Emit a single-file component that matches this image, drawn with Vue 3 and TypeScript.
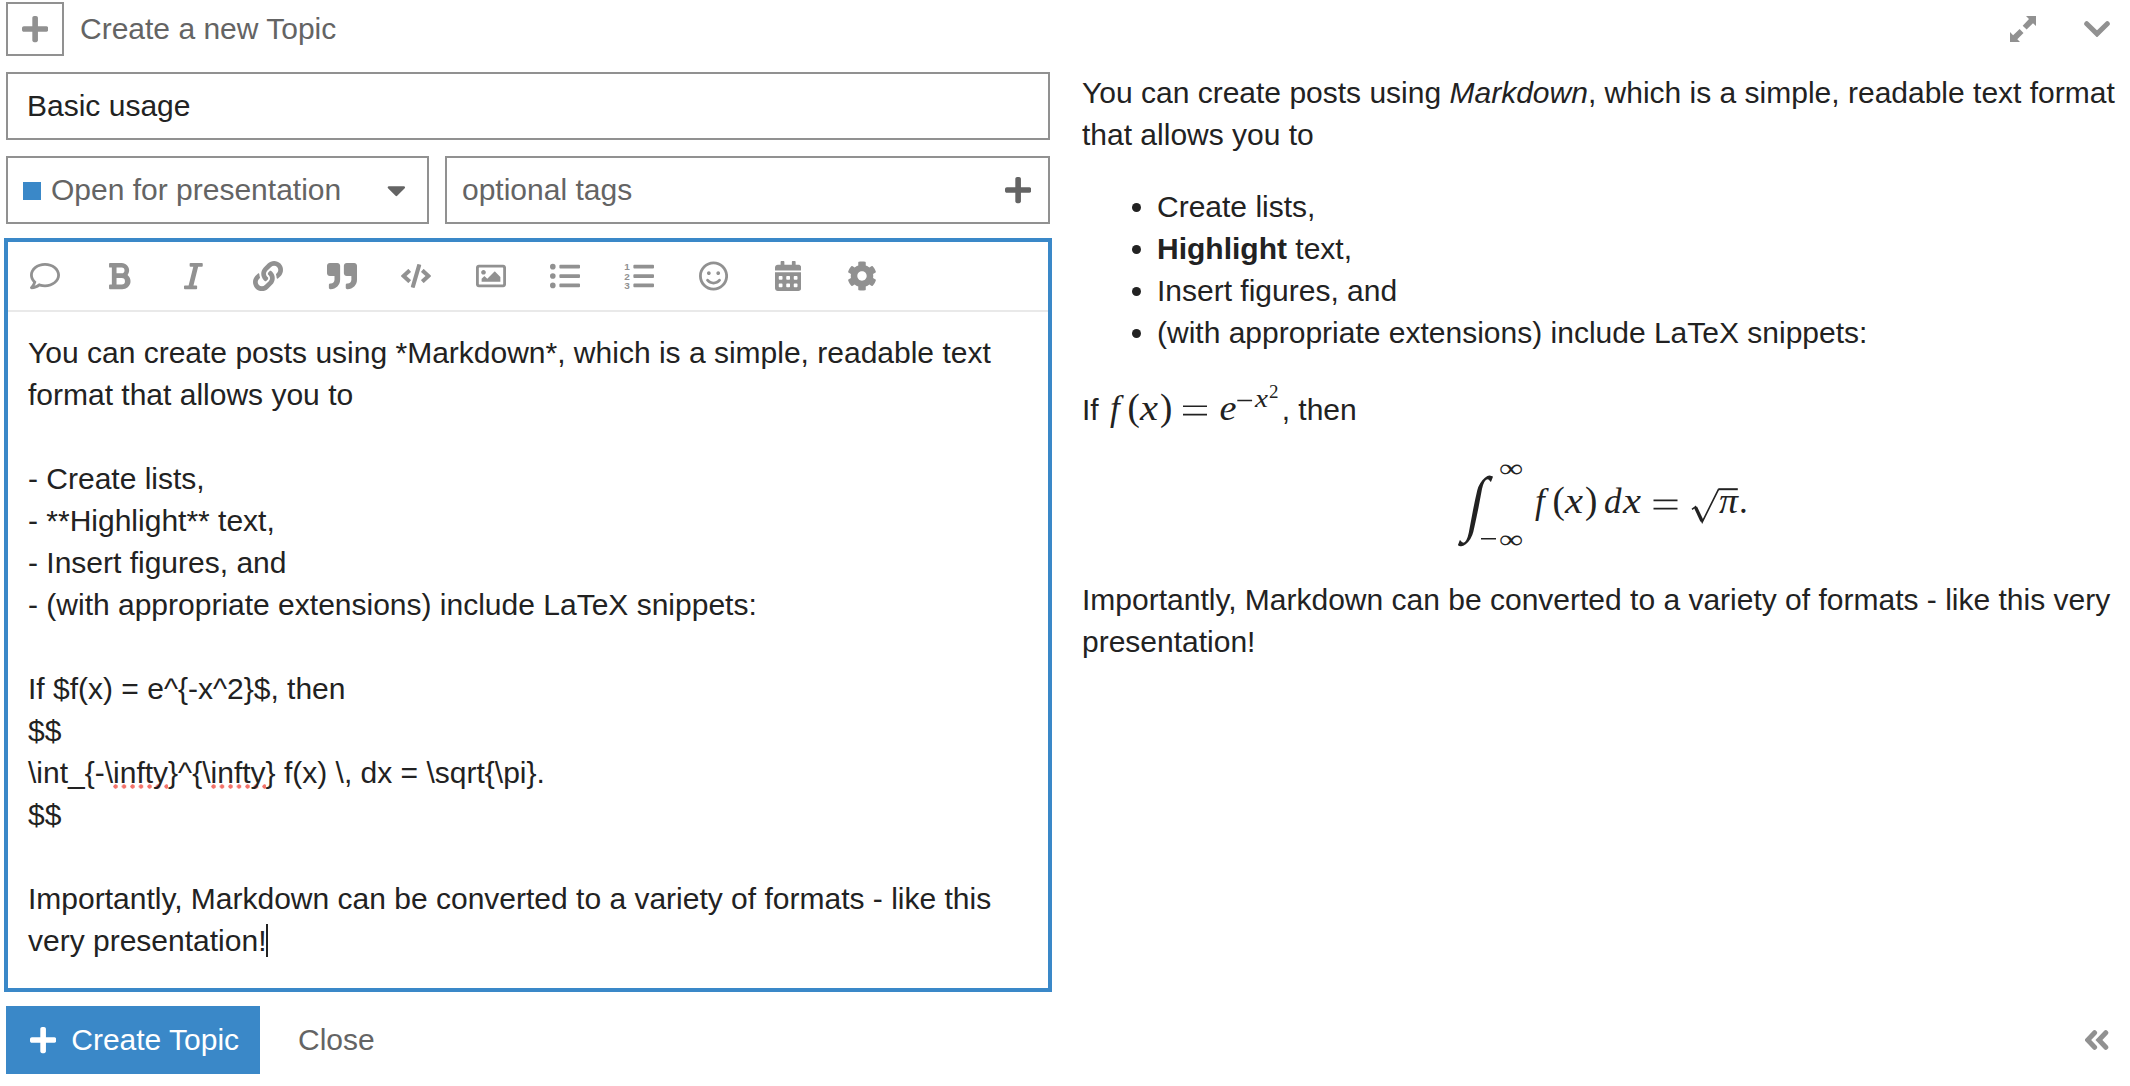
<script setup lang="ts">
interface Icon {
  name: string
  w: number
  d: string
  digits?: boolean
}

interface Glyph {
  t: string
  x: number
  y: number
  size: number
  len?: number
  upright?: boolean
}

const plus =
  'M416 208H272V64c0-17.67-14.33-32-32-32h-32c-17.67 0-32 14.33-32 32v144H32c-17.67 0-32 14.33-32 32v32c0 17.67 14.33 32 32 32h144v144c0 17.67 14.33 32 32 32h32c17.67 0 32-14.33 32-32V304h144c17.67 0 32-14.33 32-32v-32c0-17.67-14.33-32-32-32z'

const bars =
  'M496 384H176a16 16 0 0 0-16 16v32a16 16 0 0 0 16 16h320a16 16 0 0 0 16-16v-32a16 16 0 0 0-16-16zm0-320H176a16 16 0 0 0-16 16v32a16 16 0 0 0 16 16h320a16 16 0 0 0 16-16V80a16 16 0 0 0-16-16zm0 160H176a16 16 0 0 0-16 16v32a16 16 0 0 0 16 16h320a16 16 0 0 0 16-16v-32a16 16 0 0 0-16-16z'

const cell = (x: number, y: number): string =>
  `M${x} ${y}c0-6.6 5.4-12 12-12h40c6.6 0 12 5.4 12 12v40c0 6.6-5.4 12-12 12h-40c-6.6 0-12-5.4-12-12z`

const tools: Icon[] = [
  { name: 'comment', w: 512, d: 'M256 32C114.6 32 0 125.1 0 240c0 47.6 19.9 91.2 52.9 126.3C38 405.7 7 439.1 6.5 439.5c-6.6 7-8.4 17.2-4.6 26S14.4 480 24 480c61.5 0 110-25.7 139.1-46.3C192 442.8 223.2 448 256 448c141.4 0 256-93.1 256-208S397.4 32 256 32zm0 368c-26.7 0-53.1-4.1-78.4-12.1l-22.7-7.2-19.5 13.8c-14.3 10.1-33.9 21.4-57.5 29 7.3-12.1 14.4-25.7 19.9-40.2l10.6-28.1-20.6-21.8C69.7 314.1 48 282.2 48 240c0-88.2 93.3-160 208-160s208 71.8 208 160-93.3 160-208 160z' },
  { name: 'bold', w: 384, d: 'M333.49 238a122 122 0 0 0 27-65.21C367.87 96.49 308 32 233.42 32H34a16 16 0 0 0-16 16v48a16 16 0 0 0 16 16h31.87v288H34a16 16 0 0 0-16 16v48a16 16 0 0 0 16 16h209.32c70.8 0 134.14-51.75 141-122.4 4.74-48.45-16.39-92.06-50.83-119.6zM145.66 112h87.76a48 48 0 0 1 0 96h-87.76zm87.76 288h-87.76V288h87.76a56 56 0 0 1 0 112z' },
  { name: 'italic', w: 320, d: 'M320 48v32a16 16 0 0 1-16 16h-62.76l-80 320H208a16 16 0 0 1 16 16v32a16 16 0 0 1-16 16H16a16 16 0 0 1-16-16v-32a16 16 0 0 1 16-16h62.76l80-320H112a16 16 0 0 1-16-16V48a16 16 0 0 1 16-16h192a16 16 0 0 1 16 16z' },
  { name: 'link', w: 512, d: 'M326.612 185.391c59.747 59.809 58.927 155.698.36 214.59-.11.12-.24.25-.36.37l-67.2 67.2c-59.27 59.27-155.699 59.262-214.96 0-59.27-59.26-59.27-155.7 0-214.96l37.106-37.106c9.84-9.84 26.786-3.3 27.294 10.606.648 17.722 3.826 35.527 9.69 52.721 1.986 5.822.567 12.262-3.783 16.612l-13.087 13.087c-28.026 28.026-28.905 73.66-1.155 101.96 28.024 28.579 74.086 28.749 102.325.51l67.2-67.19c28.191-28.191 28.073-73.757 0-101.83-3.701-3.694-7.429-6.564-10.341-8.569a16.037 16.037 0 0 1-6.947-12.606c-.396-10.567 3.348-21.456 11.698-29.806l21.054-21.055c5.521-5.521 14.182-6.199 20.584-1.731a152.482 152.482 0 0 1 20.522 17.197zM467.547 44.449c-59.261-59.262-155.69-59.27-214.96 0l-67.2 67.2c-.12.12-.25.25-.36.37-58.566 58.892-59.387 154.781.36 214.59a152.454 152.454 0 0 0 20.521 17.196c6.402 4.468 15.064 3.789 20.584-1.731l21.054-21.055c8.35-8.35 12.094-19.239 11.698-29.806a16.037 16.037 0 0 0-6.947-12.606c-2.912-2.005-6.64-4.875-10.341-8.569-28.073-28.073-28.191-73.639 0-101.83l67.2-67.19c28.239-28.239 74.3-28.069 102.325.51 27.75 28.3 26.872 73.934-1.155 101.96l-13.087 13.087c-4.35 4.35-5.769 10.79-3.783 16.612 5.864 17.194 9.042 34.999 9.69 52.721.509 13.906 17.454 20.446 27.294 10.606l37.106-37.106c59.271-59.259 59.271-155.699.001-214.959z' },
  { name: 'quote', w: 512, d: 'M464 32H336c-26.5 0-48 21.5-48 48v128c0 26.5 21.5 48 48 48h80v64c0 35.3-28.7 64-64 64h-8c-13.3 0-24 10.7-24 24v48c0 13.3 10.7 24 24 24h8c88.4 0 160-71.6 160-160V80c0-26.5-21.5-48-48-48zm-288 0H48C21.5 32 0 53.5 0 80v128c0 26.5 21.5 48 48 48h80v64c0 35.3-28.7 64-64 64h-8c-13.3 0-24 10.7-24 24v48c0 13.3 10.7 24 24 24h8c88.4 0 160-71.6 160-160V80c0-26.5-21.5-48-48-48z' },
  { name: 'code', w: 640, d: 'M278.9 511.5l-61-17.7c-6.4-1.8-10-8.5-8.2-14.9L346.2 8.7c1.8-6.4 8.5-10 14.9-8.2l61 17.7c6.4 1.8 10 8.5 8.2 14.9L293.8 503.3c-1.9 6.4-8.5 10.1-14.9 8.2zm-114-112.2l43.5-46.4c4.6-4.9 4.3-12.7-.8-17.2L117 256l90.6-79.7c5.1-4.5 5.5-12.3.8-17.2l-43.5-46.4c-4.5-4.8-12.1-5.1-17-.5L3.8 247.2c-5.1 4.7-5.1 12.8 0 17.5l144.1 135.1c4.9 4.6 12.5 4.4 17-.5zm327.2.6l144.1-135.1c5.1-4.7 5.1-12.8 0-17.5L492.1 112.1c-4.8-4.5-12.4-4.3-17 .5L431.6 159c-4.6 4.9-4.3 12.7.8 17.2L523 256l-90.6 79.7c-5.1 4.5-5.5 12.3-.8 17.2l43.5 46.4c4.5 4.9 12.1 5.1 17 .6z' },
  { name: 'image', w: 512, d: 'M464 64H48C21.49 64 0 85.49 0 112v288c0 26.51 21.49 48 48 48h416c26.51 0 48-21.49 48-48V112c0-26.51-21.49-48-48-48zm-6 336H54a6 6 0 0 1-6-6V118a6 6 0 0 1 6-6h404a6 6 0 0 1 6 6v276a6 6 0 0 1-6 6zM128 152c-22.091 0-40 17.909-40 40s17.909 40 40 40 40-17.909 40-40-17.909-40-40-40zM96 352h320v-80l-87.515-87.515c-4.686-4.686-12.284-4.686-16.971 0L192 304l-39.515-39.515c-4.686-4.686-12.284-4.686-16.971 0L96 304v48z' },
  { name: 'bullets', w: 512, d: 'M48 48a48 48 0 1 0 48 48 48 48 0 0 0-48-48zm0 160a48 48 0 1 0 48 48 48 48 0 0 0-48-48zm0 160a48 48 0 1 0 48 48 48 48 0 0 0-48-48z' + bars },
  { name: 'numbers', w: 512, d: bars, digits: true },
  { name: 'emoji', w: 496, d: 'M248 8C111 8 0 119 0 256s111 248 248 248 248-111 248-248S385 8 248 8zm0 448c-110.3 0-200-89.7-200-200S137.7 56 248 56s200 89.7 200 200-89.7 200-200 200zm-80-216c17.7 0 32-14.3 32-32s-14.3-32-32-32-32 14.3-32 32 14.3 32 32 32zm160 0c17.7 0 32-14.3 32-32s-14.3-32-32-32-32 14.3-32 32 14.3 32 32 32zm4 72.6c-20.8 25-51.5 39.4-84 39.4s-63.2-14.3-84-39.4c-8.5-10.2-23.7-11.5-33.8-3.1-10.2 8.5-11.5 23.6-3.1 33.8 30 36 74.1 56.6 120.9 56.6s90.9-20.6 120.9-56.6c8.5-10.2 7.1-25.3-3.1-33.8-10.1-8.4-25.3-7.1-33.8 3.1z' },
  { name: 'calendar', w: 448, d: 'M0 464c0 26.5 21.5 48 48 48h352c26.5 0 48-21.5 48-48V192H0z' + [64, 192, 320].map((x) => cell(x, 268) + cell(x, 396)).join('') + 'M400 64h-48V16c0-8.8-7.2-16-16-16h-32c-8.8 0-16 7.2-16 16v48H160V16c0-8.8-7.2-16-16-16h-32c-8.8 0-16 7.2-16 16v48H48C21.5 64 0 85.5 0 112v48h448v-48c0-26.5-21.5-48-48-48z' },
  { name: 'settings', w: 512, d: 'M487.4 315.7l-42.6-24.6c4.3-23.2 4.3-47 0-70.2l42.6-24.6c4.9-2.8 7.1-8.6 5.5-14-11.1-35.6-30-67.8-54.7-94.6-3.8-4.1-10-5.1-14.8-2.3L380.8 110c-17.9-15.4-38.5-27.3-60.8-35.1V25.8c0-5.6-3.9-10.5-9.4-11.7-36.7-8.2-74.3-7.8-109.2 0-5.5 1.2-9.4 6.1-9.4 11.7V75c-22.2 7.9-42.8 19.8-60.8 35.1L88.7 85.5c-4.9-2.8-11-1.9-14.8 2.3-24.7 26.7-43.6 58.9-54.7 94.6-1.7 5.4.6 11.2 5.5 14L67.3 221c-4.3 23.2-4.3 47 0 70.2l-42.6 24.6c-4.9 2.8-7.1 8.6-5.5 14 11.1 35.6 30 67.8 54.7 94.6 3.8 4.1 10 5.1 14.8 2.3l42.6-24.6c17.9 15.4 38.5 27.3 60.8 35.1v49.2c0 5.6 3.9 10.5 9.4 11.7 36.7 8.2 74.3 7.8 109.2 0 5.5-1.2 9.4-6.1 9.4-11.7v-49.2c22.2-7.9 42.8-19.8 60.8-35.1l42.6 24.6c4.9 2.8 11 1.9 14.8-2.3 24.7-26.7 43.6-58.9 54.7-94.6 1.5-5.5-.7-11.3-5.6-14.1zM256 336c-44.1 0-80-35.9-80-80s35.9-80 80-80 80 35.9 80 80-35.9 80-80 80z' },
]

const inlineMath: Glyph[] = [
  { t: 'f', x: 8, y: 40, size: 35 },
  { t: '(', x: 25.5, y: 40, size: 37, upright: true },
  { t: 'x', x: 38, y: 40, size: 35, len: 18 },
  { t: ')', x: 58, y: 40, size: 37, upright: true },
  { t: 'e', x: 117.5, y: 40, size: 35, len: 17 },
  { t: 'x', x: 153, y: 27, size: 25, len: 13 },
  { t: '2', x: 167, y: 18, size: 19, upright: true },
]

const displayMath: Glyph[] = [
  { t: '∞', x: 39, y: 17, size: 26, len: 24, upright: true },
  { t: '∞', x: 39, y: 88, size: 26, len: 24, upright: true },
  { t: 'f', x: 75, y: 53, size: 35 },
  { t: '(', x: 92.5, y: 53, size: 37, upright: true },
  { t: 'x', x: 105, y: 53, size: 35, len: 18 },
  { t: ')', x: 125, y: 53, size: 37, upright: true },
  { t: 'd', x: 144, y: 53, size: 35 },
  { t: 'x', x: 163, y: 53, size: 35, len: 18 },
  { t: 'π', x: 259, y: 53, size: 35, len: 19 },
  { t: '.', x: 279, y: 53, size: 35, upright: true },
]
</script>

<template>
  <div class="composer">
    <header class="top">
      <button class="action" aria-label="New topic">
        <svg class="plus" viewBox="0 0 448 512"><path :d="plus" /></svg>
      </button>
      <span class="heading">Create a new Topic</span>
      <svg class="expand" viewBox="0 0 26 26">
        <path d="M16 0H26V10L23 7.2 16.6 13.5 12.7 9.7 19 3zM0 26H10L7.3 23.2 13.5 17 9.6 13 3.1 19.3 0 16z" />
      </svg>
      <svg class="chevron" viewBox="0 0 26 16"><path d="M2.7 2.7L13 12.9 23.3 2.7" /></svg>
    </header>

    <main class="body">
      <section class="fields">
        <div class="box title">Basic usage</div>
        <div class="row">
          <div class="box category">
            <span class="badge"></span>
            <span class="label">Open for presentation</span>
            <svg class="caret-down" viewBox="0 0 320 512">
              <path d="M31.3 192h257.3c17.8 0 26.7 21.5 14.1 34.1L174.1 354.7c-7.8 7.8-20.5 7.8-28.3 0L17.2 226.1C4.6 213.5 13.5 192 31.3 192z" />
            </svg>
          </div>
          <div class="box tags">
            <span>optional tags</span>
            <svg class="plus dark" viewBox="0 0 448 512"><path :d="plus" /></svg>
          </div>
        </div>
        <div class="editor">
          <div class="toolbar">
            <span v-for="icon in tools" :key="icon.name" class="tool">
              <svg :class="['icon', icon.name]" :viewBox="`0 0 ${icon.w} 512`">
                <path fill-rule="evenodd" :d="icon.d" />
                <g v-if="icon.digits" class="digits">
                  <text x="4" y="158">1</text>
                  <text x="4" y="318">2</text>
                  <text x="4" y="478">3</text>
                </g>
              </svg>
            </span>
          </div>
          <div class="source">
            <p>You can create posts using *Markdown*, which is a simple, readable text format that allows you to</p>
            <p>
              - Create lists,<br />- **Highlight** text,<br />- Insert figures, and<br />- (with appropriate
              extensions) include LaTeX snippets:
            </p>
            <p>
              If $f(x) = e^{-x^2}$, then<br />$$<br />\int_{-\<span class="typo">infty</span>}^{\<span class="typo">infty</span>} f(x) \, dx = \sqrt{\pi}.<br />$$
            </p>
            <p>Importantly, Markdown can be converted to a variety of formats - like this very presentation!<span class="cursor"></span></p>
          </div>
        </div>
      </section>

      <section class="preview">
        <p>You can create posts using <em>Markdown</em>, which is a simple, readable text format that allows you to</p>
        <ul>
          <li>Create lists,</li>
          <li><strong>Highlight</strong> text,</li>
          <li>Insert figures, and</li>
          <li>(with appropriate extensions) include LaTeX snippets:</li>
        </ul>
        <p class="formula-line">
          <span>If</span>
          <svg class="math inline" width="180" height="54" viewBox="0 0 180 54">
            <text
              v-for="(g, i) in inlineMath" :key="i" :class="{ upright: g.upright }"
              :x="g.x" :y="g.y" :font-size="g.size" :textLength="g.len" lengthAdjust="spacingAndGlyphs"
            >{{ g.t }}</text>
            <path d="M81 26.2h24M81 34.6h24M135.3 20.5h14.8" />
          </svg>
          <span>, then</span>
        </p>
        <svg class="math display" width="290" height="100" viewBox="0 0 290 100">
          <text class="upright integral" transform="translate(4.5 67) skewX(-11) scale(.8 1)" font-size="72">∫</text>
          <text
            v-for="(g, i) in displayMath" :key="i" :class="{ upright: g.upright }"
            :x="g.x" :y="g.y" :font-size="g.size" :textLength="g.len" lengthAdjust="spacingAndGlyphs"
          >{{ g.t }}</text>
          <path d="M21 78.7h15M193.5 40.4h24M193.5 48.6h24" />
          <path class="rule" d="M258.3 29.2h19.5" />
          <path class="root" d="M232 49.3l3.6-2.6 6.6 15.4 16.4-33" />
          <path class="root-heavy" d="M235.6 47.4l6.4 13.6" />
        </svg>
        <p>Importantly, Markdown can be converted to a variety of formats - like this very presentation!</p>
      </section>
    </main>

    <footer class="bottom">
      <button class="create">
        <svg class="plus white" viewBox="0 0 448 512"><path :d="plus" /></svg>
        <span>Create Topic</span>
      </button>
      <span class="close">Close</span>
      <svg class="angles" viewBox="0 0 24 20"><path d="M9.6 2.7L2.7 10 9.6 17.3M20.8 2.7L13.9 10 20.8 17.3" /></svg>
    </footer>
  </div>
</template>

<style>
body {
  margin: 0;
  background: #fff;
}
</style>

<style scoped>
.composer {
  box-sizing: border-box;
  width: 2130px;
  height: 1086px;
  padding: 2px 0 12px 4px;
  display: flex;
  flex-direction: column;
  overflow: hidden;
  font: 30px/42px 'Liberation Sans', Arial, sans-serif;
  color: #222;
  background: #fff;
}
button {
  font: inherit;
  padding: 0;
}
p,
ul {
  margin: 0;
  padding: 0;
}
svg {
  display: block;
  flex: none;
  fill: #919191;
}
.plus {
  width: 26.25px;
  height: 30px;
}
.dark {
  fill: #646464;
}
.white {
  fill: #fff;
}
.top {
  height: 54px;
  padding-left: 2px;
  display: flex;
  align-items: center;
}
.action {
  box-sizing: border-box;
  width: 58px;
  height: 54px;
  border: 2px solid #919191;
  background: #fff;
  display: flex;
  align-items: center;
  justify-content: center;
}
.heading {
  flex: 1;
  margin-left: 16px;
  color: #646464;
}
.expand {
  width: 26px;
  height: 26px;
  margin-right: 48px;
}
.chevron {
  width: 26px;
  height: 16px;
  margin-right: 20px;
}
.chevron path,
.angles path {
  fill: none;
  stroke: #919191;
  stroke-width: 5;
  stroke-linecap: round;
}
.body {
  height: 920px;
  margin-top: 16px;
  display: flex;
}
.fields {
  width: 1048px;
  display: flex;
  flex-direction: column;
}
.box {
  box-sizing: border-box;
  height: 68px;
  border: 2px solid #919191;
  display: flex;
  align-items: center;
}
.title {
  margin: 0 2px;
  padding-left: 19px;
  padding-bottom: 1px;
}
.row {
  display: flex;
  gap: 16px;
  margin: 16px 2px 14px;
  color: #646464;
}
.category {
  width: 423px;
  padding: 0 20px 0 15px;
}
.badge {
  width: 18px;
  height: 18px;
  margin: 2px 10px 0 0;
  background: #3a88c8;
}
.label {
  flex: 1;
}
.caret-down {
  width: 18.75px;
  height: 30px;
  margin-right: 1px;
  fill: #646464;
}
.tags {
  flex: 1;
  padding: 0 17px 0 15px;
  justify-content: space-between;
}
.editor {
  box-sizing: border-box;
  height: 754px;
  border: 4px solid #3a88c8;
}
.toolbar {
  height: 68px;
  border-bottom: 2px solid #e9e9e9;
  display: flex;
}
.tool {
  width: 74.27px;
  display: flex;
  align-items: center;
  justify-content: center;
}
.icon {
  height: 30px;
}
.icon.code {
  width: 30px;
  height: 24px;
}
.digits text {
  font: bold 170px 'Liberation Sans', Arial, sans-serif;
}
.source {
  padding: 20px 20px 0;
  width: 990px;
}
.source p + p {
  margin-top: 42px;
}
.typo {
  background: radial-gradient(circle at 2.5px 2.5px, #f4736b 1.9px, transparent 2.4px) 0 100% / 8.5px 5px repeat-x;
}
.cursor {
  display: inline-block;
  width: 2px;
  height: 33px;
  margin-right: -2px;
  background: #222;
  vertical-align: -6px;
}
.preview {
  width: 1044px;
  margin-left: 30px;
}
ul {
  margin-top: 30px;
  list-style: none;
}
li {
  display: flex;
  align-items: center;
  white-space: pre;
}
li::before {
  content: '';
  width: 9px;
  height: 9px;
  margin: 0 16px 0 50px;
  border-radius: 50%;
  background: #222;
}
.formula-line {
  display: flex;
  align-items: flex-end;
  height: 47px;
  margin-top: 30px;
}
.math {
  fill: #222;
  overflow: visible;
}
.math text {
  font-family: 'Liberation Serif', 'Times New Roman', serif;
  font-style: italic;
}
.math .upright {
  font-style: normal;
}
.math path {
  fill: none;
  stroke: #222;
  stroke-width: 1.6;
}
.math .rule {
  stroke-width: 2;
}
.math .root-heavy {
  stroke-width: 3.4;
}
.inline {
  margin: 0 -0.5px -3px 3.5px;
}
.display {
  margin: 29px 0 19px 378px;
}
.bottom {
  height: 68px;
  margin-top: 14px;
  padding-left: 2px;
  display: flex;
  align-items: center;
}
.create {
  width: 254px;
  height: 68px;
  border: 0;
  padding-left: 24px;
  background: #3a88c8;
  color: #fff;
  display: flex;
  align-items: center;
  gap: 15px;
}
.close {
  flex: 1;
  margin-left: 38px;
  color: #646464;
}
.angles {
  width: 24px;
  height: 20px;
  margin-right: 21px;
}
</style>
